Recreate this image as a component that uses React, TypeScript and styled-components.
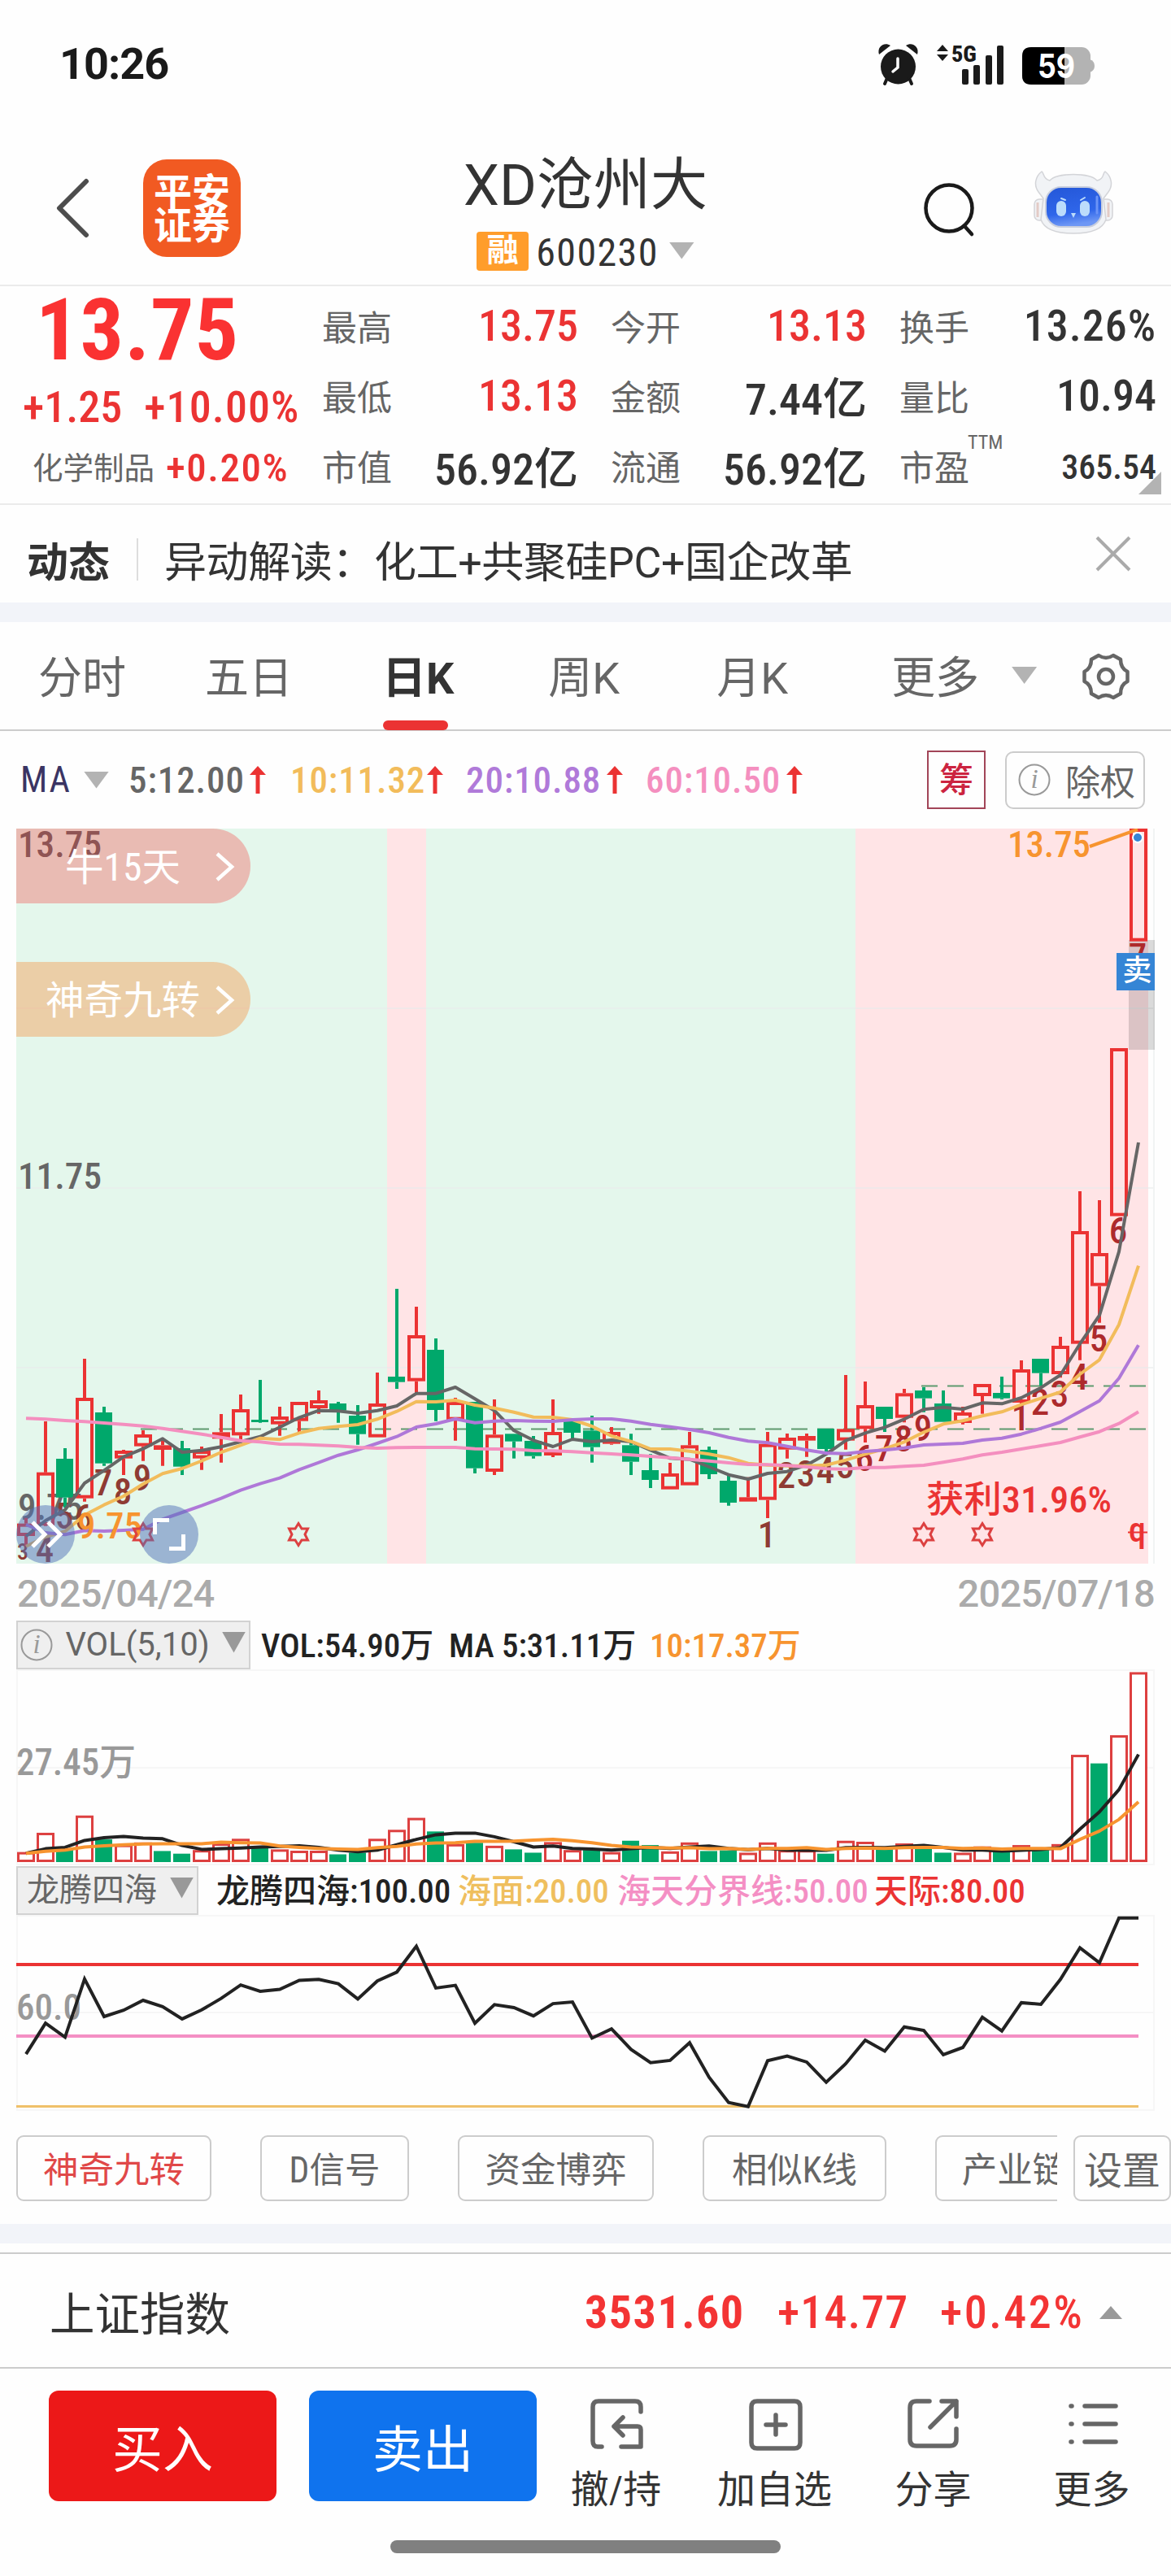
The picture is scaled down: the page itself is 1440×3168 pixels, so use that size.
import React from 'react';
import styled, { createGlobalStyle } from 'styled-components';

const red = '#eb3333';
const green = '#00a86b';
const grey = '#666666';
const ink = '#333333';

const GlobalStyle = createGlobalStyle`
  * {
    box-sizing: border-box;
  }
  body {
    margin: 0;
    background: #fefefe;
    font-family: Roboto, 'Noto Sans CJK SC', sans-serif;
    font-stretch: 75%;
    color: ${ink};
  }
`;

const Screen = styled.div`
  width: 1440px;
  height: 3168px;
  overflow: hidden;
  display: flex;
  flex-direction: column;
  white-space: nowrap;
`;

// ---------- status bar ----------

const StatusBar = styled.header`
  flex: 0 0 160px;
  display: flex;
  justify-content: space-between;
  padding: 48px 92px 0 73px;
`;

const Clock = styled.div`
  font-size: 54px;
  line-height: 62px;
  font-weight: 700;
  font-stretch: 100%;
  letter-spacing: -1px;
  color: #1a1a1a;
`;

const StatusIcons = () => (
  <svg width="270" height="60" viewBox="1078 48 270 60">
    <g fill="#1a1a1a">
      <circle cx="1104.500" cy="82" r="21.500" />
      <path d="M1081 67c-3-9 6-16 14-11z" />
      <path d="M1128 67c3-9-6-16-14-11z" />
      <path d="M1091 96l-3 7M1118 96l3 7" stroke="#1a1a1a" strokeWidth="4" strokeLinecap="round" />
      <path d="M1152 63l7-8 7 8zM1152 67l7 8 7-8z" />
      <rect x="1183" y="85" width="8" height="19" rx="2" />
      <rect x="1197" y="80" width="8" height="24" rx="2" />
      <rect x="1212" y="68" width="8" height="36" rx="2" />
      <rect x="1226" y="56" width="8" height="48" rx="2" />
    </g>
    <path d="M1104 72v11l-6 5" fill="none" stroke="#fff" strokeWidth="3.500" strokeLinecap="round" />
    <text x="1170" y="76" fontSize="28" fontWeight="800" fill="#1a1a1a" textLength="31" lengthAdjust="spacingAndGlyphs">
      5G
    </text>
    <path d="M1340 73q6 2 6 8t-6 8z" fill="#b3b3b3" />
    <rect x="1257" y="58" width="84" height="46" rx="11" fill="#b3b3b3" />
    <path d="M1309 58h-41q-11 0-11 11v24q0 11 11 11h41z" fill="#000" />
    <text x="1276" y="96" fontSize="41" fontWeight="700" fill="#fff" textLength="46" lengthAdjust="spacingAndGlyphs" fontFamily="Inter, sans-serif">
      59
    </text>
  </svg>
);

// ---------- navigation ----------

const NavBar = styled.nav`
  flex: 0 0 192px;
  display: grid;
  grid-template-columns: 1fr auto 1fr;
  border-bottom: 2px solid #ebebeb;
`;

const NavLeft = styled.div`
  display: flex;
  padding: 36px 0 0 68px;
`;

const Back = styled.svg`
  margin: 23px 64px 0 0;
`;

const Logo = styled.div`
  width: 120px;
  height: 120px;
  padding-top: 20px;
  border-radius: 29px;
  background: #f15a22;
  color: #fff;
  font-size: 47px;
  line-height: 41px;
  font-weight: 700;
  text-align: center;
`;

const Heading = styled.div`
  display: flex;
  flex-direction: column;
  align-items: center;
  padding-top: 26px;
`;

const StockName = styled.h1`
  margin: 0;
  font-size: 70px;
  line-height: 84px;
  font-weight: 400;
  font-stretch: 100%;
`;

const CodeRow = styled.div`
  display: flex;
  align-items: center;
  height: 48px;
  margin-top: 15px;
  font-size: 48px;
  line-height: 54px;
  letter-spacing: 1.4px;
`;

const MarginTag = styled.span`
  width: 64px;
  height: 48px;
  margin-right: 9px;
  border-radius: 4px;
  background: #ff9d2b;
  color: #fff;
  font-size: 39px;
  line-height: 47px;
  font-weight: 700;
  letter-spacing: 0;
  text-align: center;
`;

const CodeText = styled.span`
  margin-top: 4px;
`;

const Triangle = styled.i<{ $w?: number; $h?: number; $color?: string; $up?: boolean }>`
  display: block;
  flex: none;
  width: ${({ $w = 31 }) => $w}px;
  height: ${({ $h = 21 }) => $h}px;
  background: ${({ $color = '#b3b3b3' }) => $color};
  clip-path: ${({ $up }) => ($up ? 'polygon(50% 0, 100% 100%, 0 100%)' : 'polygon(0 0, 100% 0, 50% 100%)')};
`;

const CodeTriangle = styled(Triangle)`
  margin: -2px 0 0 13px;
`;

const NavRight = styled.div`
  display: flex;
  justify-content: flex-end;
  align-items: flex-start;
  gap: 70px;
  padding: 48px 70px 0 0;
`;

const Robot = () => (
  <svg width="100" height="84" viewBox="0 0 100 84">
    <defs>
      <linearGradient id="visor" x1="0" y1="0" x2="0.2" y2="1">
        <stop offset="0" stopColor="#2457d8" />
        <stop offset="0.7" stopColor="#2f66ea" />
        <stop offset="1" stopColor="#6d97f5" />
      </linearGradient>
    </defs>
    <g fill="#f1f3f6" stroke="#d3d4d8" strokeWidth="1.500">
      <rect x="2" y="37" width="16" height="26" rx="6" />
      <rect x="82" y="37" width="16" height="26" rx="6" />
      <path d="M11 3c-8 6-10 17-4 25l6 8-3 26c4 12 18 17 40 17s36-5 40-17l-3-26 6-8c6-8 4-19-4-25-3 1-1 10-10 11C70 4 30 4 21 14 12 12 14 4 11 3z" />
    </g>
    <path d="M6 41v18M93 41v18" stroke="#e3cbc6" strokeWidth="3" />
    <rect x="16" y="22" width="69" height="49" rx="19" fill="url(#visor)" stroke="#c8cedd" strokeWidth="2" />
    <path d="M79 34v20" stroke="#6b93f7" strokeWidth="3" strokeLinecap="round" />
    <rect x="29" y="39" width="12" height="19" rx="6" fill="#bcdcfb" />
    <rect x="58" y="39" width="12" height="19" rx="6" fill="#bcdcfb" />
    <path d="M47 54h6l-3 6z" fill="#bcdcfb" />
    <path d="M35 36l5 2M59 38l5-3" stroke="#bcdcfb" strokeWidth="2" strokeLinecap="round" />
  </svg>
);

// ---------- quote panel ----------

const QuotePanel = styled.section`
  flex: 0 0 269px;
  display: grid;
  grid-template-columns: 396px 355px 355px 1fr;
  position: relative;
  border-bottom: 2px solid #ebebeb;
`;

const PriceColumn = styled.div`
  display: flex;
  flex-direction: column;
  color: ${red};
`;

const LastPrice = styled.div`
  padding-left: 44px;
  margin-top: 1px;
  font-size: 106px;
  line-height: 107px;
  height: 105px;
  font-weight: 700;
  letter-spacing: 1px;
  color: #fa3232;
`;

const ChangeRow = styled.div`
  display: flex;
  gap: 27px;
  padding-left: 28px;
  margin-top: 12px;
  font-size: 54px;
  line-height: 62px;
  font-weight: 500;
`;

const ChangePercent = styled.span`
  letter-spacing: 1.1px;
`;

const SectorRow = styled.div`
  display: flex;
  align-items: center;
  gap: 14px;
  padding-left: 40px;
  margin-top: 16px;
  font-size: 49px;
  line-height: 56px;
  font-weight: 500;
  letter-spacing: 1.5px;
`;

const SectorName = styled.span`
  font-size: 37.500px;
  font-weight: 400;
  letter-spacing: 0;
  color: ${grey};
`;

const StatColumn = styled.div<{ $right: number }>`
  display: grid;
  grid-template-rows: repeat(3, 86px);
  padding: 5px ${({ $right }) => $right}px 0 0;
`;

const Stat = styled.div`
  display: flex;
  justify-content: space-between;
  align-items: center;
`;

const StatLabel = styled.span`
  position: relative;
  font-size: 43px;
  color: ${grey};
`;

const StatValue = styled.span<{ $up?: boolean; $small?: boolean; $wide?: boolean }>`
  padding-top: ${({ $small }) => ($small ? 4 : 0)}px;
  font-size: ${({ $small }) => ($small ? 42 : 54)}px;
  font-weight: 500;
  letter-spacing: ${({ $wide }) => ($wide ? 1 : 0)}px;
  color: ${({ $up }) => ($up ? red : ink)};
`;

const Superscript = styled.sup`
  position: absolute;
  left: 84px;
  top: -11px;
  font-size: 24px;
  line-height: 28px;
`;

const Corner = styled.i`
  position: absolute;
  right: 12px;
  bottom: 11px;
  width: 28px;
  height: 28px;
  background: #b3b3b3;
  clip-path: polygon(100% 0, 100% 100%, 0 100%);
`;

interface StatItem {
  label: string;
  value: string;
  up?: boolean;
  sup?: string;
}

const stats: StatItem[][] = [
  [
    { label: '最高', value: '13.75', up: true },
    { label: '最低', value: '13.13', up: true },
    { label: '市值', value: '56.92亿' },
  ],
  [
    { label: '今开', value: '13.13', up: true },
    { label: '金额', value: '7.44亿' },
    { label: '流通', value: '56.92亿' },
  ],
  [
    { label: '换手', value: '13.26%' },
    { label: '量比', value: '10.94' },
    { label: '市盈', value: '365.54', sup: 'TTM' },
  ],
];

// ---------- news strip ----------

const NewsStrip = styled.section`
  flex: 0 0 120px;
  display: flex;
  align-items: center;
  padding: 13px 48px 0 33px;
  font-size: 52px;
`;

const NewsTag = styled.strong`
  font-size: 51px;
  font-weight: 600;
`;

const NewsDivider = styled.i`
  width: 2px;
  height: 52px;
  margin: 0 32px 0 33px;
  background: #dddddd;
`;

const NewsText = styled.span`
  flex: 1;
  font-stretch: 100%;
  letter-spacing: -0.4px;
`;

const CloseIcon = styled.svg`
  margin-top: -13px;
`;

const Gutter = styled.div`
  flex: 0 0 24px;
  background: #f2f4f9;
`;

// ---------- period tabs ----------

const Tabs = styled.div`
  flex: 0 0 134px;
  display: flex;
  align-items: flex-start;
  border-bottom: 2px solid #cccccc;
`;

const Tab = styled.div<{ $left: number; $active?: boolean }>`
  position: relative;
  height: 132px;
  margin-left: ${({ $left }) => $left}px;
  font-size: 54px;
  line-height: 139px;
  font-weight: ${({ $active }) => ($active ? 700 : 400)};
  font-stretch: 100%;
  color: ${({ $active }) => ($active ? ink : grey)};
`;

const TabBar = styled.i`
  position: absolute;
  left: 1px;
  bottom: -1px;
  width: 80px;
  height: 12px;
  border-radius: 6px;
  background: ${red};
`;

const TabTriangle = styled.div`
  margin: 55px 55px 0 40px;
`;

const GearIcon = styled.svg`
  margin-top: 36px;
`;

// ---------- moving average legend ----------

const MaRow = styled.div`
  flex: 0 0 120px;
  display: flex;
  align-items: center;
  padding: 0 32px 0 25px;
  font-size: 45px;
`;

const MaName = styled.span`
  width: 62px;
  margin-right: 16px;
  color: #3a3463;
  font-size: 44px;
  letter-spacing: 2px;
`;

const MaValue = styled.span<{ $color: string; $width: number; $left: number }>`
  display: flex;
  align-items: center;
  justify-content: space-between;
  width: ${({ $width }) => $width}px;
  margin-left: ${({ $left }) => $left}px;
  color: ${({ $color }) => $color};
  font-weight: 500;
  letter-spacing: 0.9px;
`;

const ChipBox = styled.span`
  width: 72px;
  height: 72px;
  margin-left: auto;
  border: 2px solid #a24558;
  color: #cc2440;
  font-size: 42px;
  line-height: 70px;
  font-weight: 500;
  text-align: center;
`;

const AdjustBox = styled.span`
  display: flex;
  align-items: center;
  width: 172px;
  height: 71px;
  margin-left: 24px;
  padding: 0 0 0 14px;
  gap: 18px;
  border: 2px solid #cccccc;
  border-radius: 10px;
  color: ${grey};
  font-size: 43px;
`;

const InfoIcon = () => (
  <svg width="40" height="40" viewBox="0 0 40 40">
    <circle cx="20" cy="20" r="18.500" fill="none" stroke="#999" strokeWidth="2" />
    <text x="20" y="30" fontSize="33" fontStyle="italic" fontFamily="'Liberation Serif', serif" fill="#999" textAnchor="middle">
      i
    </text>
  </svg>
);

const ArrowSvg = styled.svg`
  flex: none;
`;

const UpArrow = () => (
  <ArrowSvg width="20" height="34" viewBox="0 0 20 34">
    <path d="M10 0l10 11h-7.500v23h-5V11H0z" fill={red} />
  </ArrowSvg>
);

// ---------- charts ----------

const slot = 24;
const firstX = 32;
const barWidth = 22;
const xAt = (i: number) => firstX + slot * i;

const linePoints = (values: number[], toY: (v: number) => number) =>
  values.map((v, i) => `${xAt(i)},${toY(v).toFixed(1)}`).join(' ');

// up / high / low / body top / body bottom, in thirds of a pixel from the plot's zero row
type Candle = [number, number, number, number, number];

const candles: Candle[] = [
  [1, 1100, 1205, 1121, 1167], [1, 744, 1130, 932, 1128], [0, 843, 1062, 882, 1025], [1, 513, 1040, 657, 1028],
  [0, 690, 908, 711, 899], [1, 849, 942, 852, 881], [1, 777, 890, 792, 836], [1, 805, 908, 832, 849],
  [0, 816, 942, 843, 911], [1, 837, 923, 852, 881], [1, 717, 896, 784, 808], [1, 645, 822, 699, 796],
  [0, 591, 749, 738, 746], [1, 690, 797, 726, 755], [1, 672, 790, 672, 743], [1, 630, 716, 666, 696],
  [0, 672, 749, 678, 704], [0, 684, 830, 723, 791], [1, 564, 803, 678, 803], [0, 255, 624, 579, 599],
  [1, 321, 640, 426, 596], [0, 438, 743, 480, 702], [1, 657, 815, 672, 740], [0, 672, 936, 672, 917],
  [1, 663, 942, 793, 930], [0, 790, 881, 790, 818], [0, 798, 881, 816, 872], [1, 663, 876, 783, 870],
  [0, 743, 808, 743, 786], [0, 723, 896, 778, 839], [1, 765, 830, 783, 827], [0, 790, 942, 832, 893],
  [0, 865, 990, 924, 960], [1, 897, 995, 936, 995], [1, 783, 980, 832, 980], [0, 837, 957, 849, 939],
  [0, 940, 1055, 963, 1044], [1, 950, 1040, 1024, 1040], [1, 783, 1101, 827, 1034], [1, 789, 881, 804, 848],
  [1, 789, 875, 798, 815], [0, 771, 855, 771, 846], [1, 573, 848, 772, 815], [1, 597, 822, 684, 772],
  [0, 690, 783, 690, 735], [1, 624, 748, 640, 731], [0, 618, 710, 630, 659], [0, 630, 746, 678, 746],
  [1, 690, 755, 711, 750], [1, 606, 716, 606, 651], [0, 579, 663, 639, 659], [1, 519, 678, 552, 675],
  [0, 513, 612, 513, 566], [1, 432, 583, 465, 570], [1, -105, 518, 42, 458], [1, -72, 380, 123, 245],
  [1, -633, -13, -633, -13], [1, -1443, -1027, -1443, -1027],
];

const ma5 = [
  1168, 1110, 1070, 972, 925, 875, 845, 808, 858, 851, 838, 819, 800, 766, 730, 704, 706, 714, 704, 687, 641, 641, 618, 661, 704,
  778, 814, 837, 810, 819, 813, 819, 850, 880, 884, 912, 941, 957, 936, 929, 905, 865, 815, 787, 766, 736, 700, 692, 699, 676,
  679, 657, 620, 573, 458, 353, 118, -285,
];
const ma10 = [
  1205, 1170, 1150, 1090, 1052, 1020, 975, 937, 918, 890, 858, 832, 806, 811, 787, 770, 763, 756, 736, 707, 671, 672, 666, 684,
  695, 710, 728, 729, 738, 762, 798, 818, 846, 846, 854, 865, 878, 899, 905, 908, 908, 905, 887, 865, 845, 820, 784, 754, 742,
  724, 709, 682, 659, 636, 570, 517, 387, 170,
];
const ma20 = [
  1125, 1155, 1162, 1147, 1149, 1146, 1142, 1105, 1080, 1055, 1028, 998, 974, 953, 922, 896, 869, 849, 825, 800, 765, 753, 735,
  749, 743, 741, 743, 744, 738, 735, 735, 743, 755, 764, 774, 786, 803, 817, 823, 836, 850, 861, 863, 855, 850, 842, 831, 828,
  825, 813, 806, 791, 770, 747, 708, 668, 585, 463,
];
const ma60 = [
  733, 736, 741, 745, 750, 755, 761, 770, 781, 791, 803, 815, 820, 828, 829, 832, 835, 840, 843, 841, 840, 840, 840, 845, 846,
  847, 852, 853, 856, 860, 864, 868, 873, 878, 884, 890, 897, 903, 904, 907, 912, 919, 920, 914, 914, 910, 906, 895, 883, 868,
  858, 846, 834, 822, 802, 782, 752, 709,
];

const priceY = (v: number) => 481 + v / 3;

// nine-turn counts: slot, digit, baseline
const turns: [number, string, number][] = [
  [1, '4', 1262], [2, '5', 1140], [3, '6', 1146], [4, '7', 1017], [5, '8', 1049], [6, '9', 999],
  [38, '1', 1209], [39, '2', 990], [40, '3', 983], [41, '4', 971], [42, '5', 955], [43, '6', 928], [44, '7', 890],
  [45, '8', 856], [46, '9', 817], [51, '1', 778], [52, '2', 720], [53, '3', 691], [54, '4', 626], [55, '5', 487],
  [56, '6', 88], [57, '7', -924],
];

const PlotArea = styled.div`
  position: relative;
  flex: 0 0 904px;
`;

const ChartSvg = styled.svg`
  display: block;
`;

const Pill = styled.div<{ $top: number; $tint: string; $indent: number }>`
  position: absolute;
  left: 20px;
  top: ${({ $top }) => $top}px;
  width: 288px;
  height: 92px;
  padding: 1px 19px 0 ${({ $indent }) => $indent}px;
  display: flex;
  align-items: center;
  justify-content: space-between;
  border-radius: 0 46px 46px 0;
  background: ${({ $tint }) => $tint};
  color: #fff;
  font-size: 47.500px;
  line-height: 91px;
`;

const PillLabel = styled.span`
  padding-top: 4px;
`;

const RoundButton = styled.div<{ $left: number }>`
  position: absolute;
  left: ${({ $left }) => $left}px;
  top: 832px;
  width: 72px;
  height: 72px;
  border-radius: 50%;
  background: rgba(82, 113, 184, 0.5);
`;

const SellFlag = styled.div`
  position: absolute;
  left: 1373px;
  top: 153px;
  width: 47px;
  height: 46px;
  padding-left: 4px;
  background: #3585d5;
  color: #fff;
  font-size: 36px;
  line-height: 45px;
  font-weight: 500;
  text-align: center;
`;

const Star = ({ x, y }: { x: number; y: number }) => (
  <path
    d="M0-13.500L4-7H11.500L8 0l3.500 7H4L0 13.500-4 7h-7.500L-8 0l-3.500-7H-4z"
    transform={`translate(${x} ${y})`}
    fill="none"
    stroke="#dc4040"
    strokeWidth="3"
  />
);

const SmallChevron = () => (
  <svg width="24" height="36" viewBox="0 0 24 36">
    <path d="M2 2l18 16L2 34" fill="none" stroke="#fff" strokeWidth="4.500" />
  </svg>
);

const PriceChart = () => (
  <PlotArea>
    <ChartSvg width="1440" height="904" viewBox="0 0 1440 904">
      <rect x="20" width="1032" height="904" fill="#e4f7ec" />
      <rect x="476" width="48" height="904" fill="#ffe4e6" />
      <rect x="1052" width="360" height="904" fill="#ffe4e6" />
      <path d="M20 221H1420M20 442H1420M20 663H1420M1419 0V904" stroke="#e9ecec" strokeWidth="2" opacity="0.6" />
      <rect x="1388" y="137" width="32" height="135" fill="#000" opacity="0.14" />
      <g fontSize="45" fontWeight="500" fill={grey}>
        <text x="22" y="35" textLength="103" lengthAdjust="spacingAndGlyphs">13.75</text>
        <text x="22" y="443" textLength="103" lengthAdjust="spacingAndGlyphs">11.75</text>
        <text x="22" y="850" textLength="80" lengthAdjust="spacingAndGlyphs">9.75</text>
      </g>
      <path d="M173 738.500H1420M1133 685.500H1420" stroke="#5f9a6f" strokeWidth="2" strokeDasharray="20 12" />
      <g fontSize="45" fontWeight="500" textAnchor="middle">
        <text x="28" y="899" fontSize="28" fill="#8f3b33">3</text>
        {turns.map(([i, digit, base]) => (
          <text key={i} x={xAt(i) - 1} y={priceY(base)} fill={i < 43 ? '#8f3b33' : '#ad2a2c'}>
            {digit}
          </text>
        ))}
      </g>
      {candles.map(([up, high, low, top, bottom], i) => {
        const x = xAt(i);
        const [h, l, t, b] = [high, low, top, bottom].map(priceY);
        const color = up ? red : green;
        return (
          <g key={i}>
            <path d={`M${x} ${h}V${t}M${x} ${b}V${l}`} stroke={color} strokeWidth="4" />
            {up ? (
              <rect x={x - 9} y={t + 2} width={barWidth - 4} height={Math.max(b - t - 4, 1)} fill="none" stroke={color} strokeWidth="4" />
            ) : (
              <rect x={x - 11} y={t} width={barWidth - 1} height={Math.max(b - t, 3)} fill={color} />
            )}
          </g>
        );
      })}
      <g fill="none" strokeWidth="4" strokeLinejoin="round">
        <polyline points={linePoints(ma5, priceY)} stroke={grey} />
        <polyline points={linePoints(ma10, priceY)} stroke="#f2bc5b" />
        <polyline points={linePoints(ma20, priceY)} stroke="#af78d8" />
        <polyline points={linePoints(ma60, priceY)} stroke="#f48fbf" />
      </g>
      <g fontSize="45" fontWeight="500" fill="#f7942f">
        <text x="1239" y="35" textLength="102" lengthAdjust="spacingAndGlyphs">13.75</text>
        <text x="95" y="873" textLength="80" lengthAdjust="spacingAndGlyphs">9.75</text>
      </g>
      <path d="M1340 22L1399 1" stroke="#f7942f" strokeWidth="4" />
      <circle cx="1399" cy="11" r="6" fill="#3585d5" stroke="#fff" strokeWidth="2" />
      <text x="1139" y="841" fontSize="45" fontWeight="500" fill={red} textLength="228" lengthAdjust="spacingAndGlyphs">
        获利31.96%
      </text>
      <Star x={176} y={868} />
      <Star x={367} y={868} />
      <Star x={1136} y={868} />
      <Star x={1208} y={868} />
      <text x="1388" y="877" fontSize="42" fontWeight="500" fill={red}>q</text>
      <path d="M1387 865.500h24" stroke={red} strokeWidth="2" />
    </ChartSvg>
    <Pill $top={0} $tint="rgba(243, 43, 43, 0.29)" $indent={60}>
      <PillLabel>牛15天</PillLabel>
      <SmallChevron />
    </Pill>
    <Pill $top={164} $tint="rgba(252, 106, 0, 0.29)" $indent={36}>
      <PillLabel>神奇九转</PillLabel>
      <SmallChevron />
    </Pill>
    <RoundButton $left={20}>
      <svg width="72" height="72" viewBox="0 0 72 72">
        <path d="M20 21l15 15-15 15M39 21l15 15-15 15" fill="none" stroke="#fff" strokeWidth="5" />
      </svg>
    </RoundButton>
    <RoundButton $left={172}>
      <svg width="72" height="72" viewBox="0 0 72 72">
        <path d="M18.500 36V18.500H36M36 53.500h17.500V36" fill="none" stroke="#fff" strokeWidth="5" />
      </svg>
    </RoundButton>
    <SellFlag>卖</SellFlag>
  </PlotArea>
);

const DateRow = styled.div`
  flex: 0 0 69px;
  display: flex;
  justify-content: space-between;
  padding: 4px 20px 0 21px;
  font-size: 47px;
  line-height: 65px;
  font-weight: 500;
  font-stretch: 100%;
  letter-spacing: -0.8px;
  color: #ababab;
`;

const LegendRow = styled.div<{ $gap: number }>`
  flex: 0 0 61px;
  display: flex;
  align-items: center;
  gap: 14px;
  font-size: 41px;
  font-weight: 500;
  line-height: 56px;

  > :first-child {
    margin: 0 ${({ $gap }) => $gap}px 0 20px;
  }
`;

const IndicatorPicker = styled.div<{ $width: number }>`
  display: flex;
  align-items: center;
  justify-content: space-between;
  width: ${({ $width }) => $width}px;
  height: 60px;
  padding: 0 4px 0 3px;
  border: 2px solid #d2d2d2;
  background: #efefef;
  color: ${grey};
  font-size: 40px;
  font-weight: 400;
  font-stretch: 100%;
`;

const PickerLabel = styled.span`
  margin-left: 8px;
`;

const PickerTriangle = styled(Triangle)`
  margin-top: -6px;
`;

const LegendValue = styled.span<{ $color?: string; $width: number }>`
  width: ${({ $width }) => $width}px;
  padding-top: 2px;
  color: ${({ $color = '#222222' }) => $color};
`;

const SubPlot = styled.div`
  flex: 0 0 241px;
`;

// up / top of bar
const volumes: [number, number][] = [
  [1, 728], [1, 670], [0, 720], [1, 618], [0, 690], [1, 706], [1, 699], [0, 725], [0, 733], [1, 722], [1, 702], [1, 688],
  [0, 715], [1, 720], [1, 724], [1, 724], [0, 735], [0, 730], [1, 688], [1, 661], [1, 625], [0, 666], [1, 704], [0, 700],
  [1, 709], [0, 720], [0, 730], [1, 698], [1, 722], [0, 722], [1, 728], [0, 694], [0, 707], [1, 726], [1, 699], [0, 725],
  [0, 723], [1, 730], [1, 699], [1, 722], [1, 722], [0, 733], [1, 694], [1, 697], [0, 720], [1, 702], [0, 712], [0, 730],
  [1, 730], [1, 711], [0, 722], [1, 707], [0, 722], [1, 704], [1, 435], [0, 461], [1, 376], [1, 186],
];
const volMa5 = [
  732, 718, 714, 693, 685, 681, 686, 688, 708, 720, 718, 716, 713, 711, 709, 714, 722, 727, 722, 706, 690, 676, 671, 671, 682,
  697, 713, 710, 717, 719, 722, 718, 714, 717, 713, 710, 717, 721, 717, 722, 723, 723, 715, 714, 715, 711, 708, 714, 722, 722,
  725, 723, 720, 715, 659, 607, 540, 434,
];
const volMa10 = [
  732, 726, 722, 713, 709, 706, 704, 703, 703, 703, 698, 700, 701, 710, 714, 717, 719, 720, 715, 711, 704, 701, 700, 696, 696,
  695, 692, 690, 694, 700, 708, 713, 714, 716, 715, 718, 717, 720, 717, 717, 715, 720, 717, 716, 717, 715, 714, 714, 717, 716,
  719, 717, 717, 718, 690, 665, 630, 577,
];
const volY = (v: number) => v / 2.45 - 72.5;

const VolumeChart = () => (
  <SubPlot>
    <ChartSvg width="1440" height="241" viewBox="0 0 1440 241">
      <path d="M20 1H1420M20 121H1420M1419 0V241M20 240H1420M21 0V241" stroke="#f6f6f6" strokeWidth="2" />
      <text x="20" y="130" fontSize="46" fontWeight="500" fill="#999" textLength="147" lengthAdjust="spacingAndGlyphs">
        27.45万
      </text>
      {volumes.map(([up, top], i) => {
        const y = volY(top);
        return up ? (
          <rect key={i} x={xAt(i) - 9.500} y={y + 1.500} width="19" height={237 - y - 3} fill="#fff" stroke="#dd4040" strokeWidth="3" />
        ) : (
          <rect key={i} x={xAt(i) - 11} y={y} width="21" height={237 - y} fill={green} />
        );
      })}
      <g fill="none" strokeWidth="4" strokeLinejoin="round">
        <polyline points={linePoints(volMa5, volY)} stroke="#222" />
        <polyline points={linePoints(volMa10, volY)} stroke="#f7942f" />
      </g>
    </ChartSvg>
  </SubPlot>
);

const oscillator = [
  1338, 1245, 1287, 1112, 1225, 1206, 1176, 1195, 1232, 1205, 1170, 1130, 1149, 1143, 1116, 1113, 1126, 1172, 1118, 1091, 1013,
  1139, 1131, 1245, 1189, 1198, 1223, 1186, 1181, 1290, 1262, 1324, 1364, 1357, 1304, 1408, 1484, 1496, 1358, 1344, 1362, 1423,
  1367, 1296, 1329, 1256, 1267, 1340, 1318, 1227, 1268, 1183, 1188, 1113, 1018, 1063, 928, 928,
];
const oscY = (v: number) => v / 2.45 - 375;

const OscillatorChart = () => (
  <SubPlot>
    <ChartSvg width="1440" height="241" viewBox="0 0 1440 241">
      <path d="M20 1H1420M20 120H1420M1419 0V241M20 240H1420M21 0V241" stroke="#f6f6f6" strokeWidth="2" />
      <text x="20" y="129" fontSize="45" fontWeight="500" fill="#999" textLength="80" lengthAdjust="spacingAndGlyphs">
        60.0
      </text>
      <path d="M20 61H1400" stroke={red} strokeWidth="4" />
      <path d="M20 149H1400" stroke="#f48fc4" strokeWidth="4" />
      <path d="M20 235.500H1400" stroke="#efc06a" strokeWidth="3" />
      <polyline points={linePoints(oscillator, oscY)} fill="none" stroke="#222" strokeWidth="4" />
    </ChartSvg>
  </SubPlot>
);

// ---------- signal buttons ----------

const SignalRow = styled.div`
  flex: 0 0 139px;
  display: flex;
  padding: 30px 0 0 20px;
`;

const SignalScroller = styled.div`
  display: flex;
  gap: 60px;
  width: 1280px;
  overflow: hidden;
`;

const SignalButton = styled.div<{ $width: number; $active?: boolean }>`
  flex: none;
  width: ${({ $width }) => $width}px;
  height: 81px;
  border: 2px solid #cccccc;
  border-radius: 9px;
  color: ${({ $active }) => ($active ? '#e04848' : grey)};
  font-size: 43.500px;
  line-height: 83px;
  text-align: center;
`;

const SettingsButton = styled(SignalButton)`
  margin-left: 20px;
  font-size: 47px;
`;

const signals: [string, number][] = [
  ['神奇九转', 240],
  ['D信号', 183],
  ['资金博弈', 241],
  ['相似K线', 226],
  ['产业链', 196],
];

// ---------- index row ----------

const IndexRow = styled.div`
  flex: 0 0 143px;
  display: flex;
  align-items: center;
  margin-top: 11px;
  padding: 5px 60px 0 61px;
  border-top: 2px solid #cccccc;
  border-bottom: 2px solid #cccccc;
  font-size: 56px;
`;

const IndexName = styled.span`
  flex: 1;
  margin-top: -5px;
  font-size: 55.500px;
`;

const IndexValue = styled.span<{ $width: number; $tracking: number; $bold?: boolean }>`
  width: ${({ $width }) => $width}px;
  color: #f33434;
  font-weight: ${({ $bold }) => ($bold ? 700 : 500)};
  letter-spacing: ${({ $tracking }) => $tracking}px;
`;

// ---------- bottom bar ----------

const ActionBar = styled.footer`
  flex: 0 0 211px;
  display: flex;
  padding: 27px 0 0 60px;
`;

const TradeButton = styled.div<{ $color: string }>`
  width: 280px;
  height: 136px;
  margin-right: 40px;
  border-radius: 12px;
  background: ${({ $color }) => $color};
  color: #fff;
  font-size: 62px;
  line-height: 147px;
  text-align: center;
`;

const Actions = styled.div`
  display: grid;
  grid-template-columns: repeat(4, 195px);
  margin-left: -40px;
`;

const Action = styled.div`
  display: flex;
  flex-direction: column;
  align-items: center;
  padding-top: 8px;
  font-size: 47px;
  line-height: 60px;
`;

const ActionIcon = styled.svg`
  fill: none;
  stroke: ${grey};
  stroke-width: 5.5px;
  stroke-linecap: round;
  stroke-linejoin: round;
  margin-bottom: 16px;
`;

const HomeIndicator = styled.i`
  width: 480px;
  height: 16px;
  margin: 0 auto;
  border-radius: 8px;
  background: #808080;
`;

const actions = [
  { label: '撤/持', icon: 'M16 61H11Q5 61 5 54V12Q5 5 12 5H57Q64 5 64 12V18M40 61H64V40Q64 36 60 36H31M42 25L31 36L42 47' },
  { label: '加自选', icon: 'M12 5H58Q65 5 65 12V56Q65 63 58 63H12Q5 63 5 56V12Q5 5 12 5zM35 22V46M23 34H47' },
  { label: '分享', icon: 'M29 5H13Q5 5 5 13V52Q5 60 13 60H54Q62 60 62 52V39M44 5H62V24M62 5L30 37' },
  { label: '更多', icon: 'M8 11h1M25 11h38M8 33h1M25 33h38M8 55h1M25 55h38' },
];

const App: React.FC = () => {
  return (
    <Screen>
      <GlobalStyle />
      <StatusBar>
        <Clock>10:26</Clock>
        <StatusIcons />
      </StatusBar>
      <NavBar>
        <NavLeft>
          <Back width="44" height="74" viewBox="0 0 44 74">
            <path d="M38 4L5 37l33 33" fill="none" stroke="#4d4d4d" strokeWidth="6" strokeLinecap="round" strokeLinejoin="round" />
          </Back>
          <Logo>
            平安
            <br />
            证券
          </Logo>
        </NavLeft>
        <Heading>
          <StockName>XD沧州大</StockName>
          <CodeRow>
            <MarginTag>融</MarginTag>
            <CodeText>600230</CodeText>
            <CodeTriangle />
          </CodeRow>
        </Heading>
        <NavRight>
          <svg width="66" height="84" viewBox="0 0 66 84" fill="none" stroke="#1a1a1a" strokeWidth="4.500">
            <circle cx="33" cy="48" r="28.500" />
            <path d="M52 70l9 10" strokeLinecap="round" />
          </svg>
          <Robot />
        </NavRight>
      </NavBar>

      <QuotePanel>
        <PriceColumn>
          <LastPrice>13.75</LastPrice>
          <ChangeRow>
            <span>+1.25</span>
            <ChangePercent>+10.00%</ChangePercent>
          </ChangeRow>
          <SectorRow>
            <SectorName>化学制品</SectorName>
            +0.20%
          </SectorRow>
        </PriceColumn>
        {stats.map((column, c) => (
          <StatColumn key={c} $right={c === 2 ? 18 : 40}>
            {column.map((item) => (
              <Stat key={item.label}>
                <StatLabel>
                  {item.label}
                  {item.sup && <Superscript>{item.sup}</Superscript>}
                </StatLabel>
                <StatValue $up={item.up} $small={!!item.sup} $wide={item.value.endsWith('%')}>
                  {item.value}
                </StatValue>
              </Stat>
            ))}
          </StatColumn>
        ))}
        <Corner />
      </QuotePanel>

      <NewsStrip>
        <NewsTag>动态</NewsTag>
        <NewsDivider />
        <NewsText>异动解读：化工+共聚硅PC+国企改革</NewsText>
        <CloseIcon width="46" height="46" viewBox="0 0 46 46">
          <path d="M3 3l40 40M43 3L3 43" stroke="#aaa" strokeWidth="4" />
        </CloseIcon>
      </NewsStrip>
      <Gutter />

      <Tabs>
        <Tab $left={47}>分时</Tab>
        <Tab $left={97}>五日</Tab>
        <Tab $left={110} $active>
          日K
          <TabBar />
        </Tab>
        <Tab $left={116}>周K</Tab>
        <Tab $left={119}>月K</Tab>
        <Tab $left={127}>更多</Tab>
        <TabTriangle>
          <Triangle />
        </TabTriangle>
        <GearIcon width="60" height="62" viewBox="-30 -31 60 62" fill="none" stroke={grey} strokeWidth="4.500">
          <circle r="9" />
          <path
            d="M-9-26Q0-20 9-26L18-21Q18-10 26.500-6V6Q18 10 18 21L9 26Q0 20-9 26L-18 21Q-18 10-26.500 6V-6Q-18-10-18-21z"
            strokeLinejoin="round"
          />
        </GearIcon>
      </Tabs>

      <MaRow>
        <MaName>MA</MaName>
        <Triangle />
        <MaValue $color={grey} $width={169} $left={24}>
          5:12.00
          <UpArrow />
        </MaValue>
        <MaValue $color="#f2bc5b" $width={188} $left={30}>
          10:11.32
          <UpArrow />
        </MaValue>
        <MaValue $color="#b07ad9" $width={193} $left={28}>
          20:10.88
          <UpArrow />
        </MaValue>
        <MaValue $color="#f48fbf" $width={193} $left={28}>
          60:10.50
          <UpArrow />
        </MaValue>
        <ChipBox>筹</ChipBox>
        <AdjustBox>
          <InfoIcon />
          除权
        </AdjustBox>
      </MaRow>

      <PriceChart />
      <DateRow>
        <span>2025/04/24</span>
        <span>2025/07/18</span>
      </DateRow>

      <LegendRow $gap={-1}>
        <IndicatorPicker $width={288}>
          <InfoIcon />
          VOL(5,10)
          <PickerTriangle $w={29} $h={26} $color="#999999" />
        </IndicatorPicker>
        <LegendValue $width={217}>VOL:54.90万</LegendValue>
        <LegendValue $width={233}>MA 5:31.11万</LegendValue>
        <LegendValue $width={190} $color="#f7942f">10:17.37万</LegendValue>
      </LegendRow>
      <VolumeChart />

      <LegendRow $gap={8}>
        <IndicatorPicker $width={224}>
          <PickerLabel>龙腾四海</PickerLabel>
          <PickerTriangle $w={29} $h={26} $color="#999999" />
        </IndicatorPicker>
        <LegendValue $width={283}>龙腾四海:100.00</LegendValue>
        <LegendValue $width={182} $color="#efbf5e">海面:20.00</LegendValue>
        <LegendValue $width={302} $color="#f48fc4">海天分界线:50.00</LegendValue>
        <LegendValue $width={183} $color={red}>天际:80.00</LegendValue>
      </LegendRow>
      <OscillatorChart />

      <SignalRow>
        <SignalScroller>
          {signals.map(([label, width], i) => (
            <SignalButton key={label} $width={width} $active={i === 0}>
              {label}
            </SignalButton>
          ))}
        </SignalScroller>
        <SettingsButton $width={120}>设置</SettingsButton>
      </SignalRow>
      <Gutter />

      <IndexRow>
        <IndexName>上证指数</IndexName>
        <IndexValue $width={237} $tracking={1.5} $bold>
          3531.60
        </IndexValue>
        <IndexValue $width={200} $tracking={1.1}>
          +14.77
        </IndexValue>
        <IndexValue $width={196} $tracking={2.5}>
          +0.42%
        </IndexValue>
        <Triangle $w={28} $h={16} $color="#999999" $up />
      </IndexRow>

      <ActionBar>
        <TradeButton $color="#ec1818">买入</TradeButton>
        <TradeButton $color="#0f73ee">卖出</TradeButton>
        <Actions>
          {actions.map(({ label, icon }) => (
            <Action key={label}>
              <ActionIcon width="68" height="68" viewBox="0 0 68 68">
                <path d={icon} />
              </ActionIcon>
              {label}
            </Action>
          ))}
        </Actions>
      </ActionBar>
      <HomeIndicator />
    </Screen>
  );
};

export default App;
